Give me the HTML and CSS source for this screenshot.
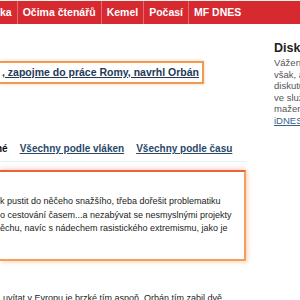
FILE: index.html
```html
<!DOCTYPE html>
<html lang="cs">
<head>
  <meta charset="UTF-8" />
  <title>Diskuse</title>
  <link rel="stylesheet" href="styles.css">
</head>
<body>

<!-- horní lišta -->
  <header class="topbar">
    <nav class="topnav">
      <a href="#">ka</a>
      <a href="#">Očima čtenářů</a>
      <a href="#">Kemel</a>
      <a href="#">Počasí</a>
      <a href="#">MF DNES</a>
    </nav>
  </header>

  <div class="page">
    <main class="content">
      <h1 class="headline"><a href="#">, zapojme do práce Romy, navrhl Orbán</a></h1>

      <div class="tabs">
        <span class="tab-current">hé</span>
        <a href="#">Všechny podle vláken</a>
        <a href="#">Všechny podle času</a>
      </div>

      <div class="comment">
        <p>k pustit do něčeho snažšího, třeba dořešit problematiku<br>
        o cestování časem...a nezabývat se nesmyslnými projekty<br>
        ěchu, navíc s nádechem rasistického extremismu, jako je</p>
      </div>

      <div class="reply">
        <p>uvítat v Evropu je brzké tím aspoň. Orbán tím zabil dvě</p>
      </div>
    </main>

    <aside class="sidebar">
      <h2>Disk</h2>
      <p>Vážení<br>
      však, a<br>
      diskutu<br>
      ve služ<br>
      mažem<br>
      <a href="#">iDNES</a></p>
    </aside>
  </div>

</body>
</html>
```

FILE: styles.css
```css
* {
  margin: 0;
  padding: 0;
  box-sizing: border-box;
}

html {
  overflow: hidden;
}

body {
  font-family: 'Liberation Sans', Arial, sans-serif;
  background: #fff;
  color: #222;
  width: 300px;
  height: 300px;
  overflow: hidden;
}

/* horní lišta */
.topbar {
  background: #d62a30;
  border-top: 1px solid #e8f4ec;
  height: 24px;
  width: 300px;
  overflow: hidden;
}

.topnav {
  display: flex;
  height: 100%;
  margin-left: -5px;
}

.topnav a {
  color: #fff;
  font-size: 10.5px;
  font-weight: bold;
  text-decoration: none;
  line-height: 23px;
  padding: 0 5px;
  border-right: 1px solid #e56b70;
  white-space: nowrap;
}

.topnav a:last-child {
  border-right: none;
}

/* obsah */
.page {
  display: flex;
  align-items: flex-start;
  width: 300px;
  height: 276px;
  overflow: hidden;
}

.content {
  width: 246px;
  flex-shrink: 0;
}

.headline {
  display: block;
  width: fit-content;
  margin-top: 37px;
  height: 23px;
  border: 2px solid #ee9a52;
  border-left: none;
  box-shadow: 0 0 3px rgba(240, 160, 90, 0.5);
  padding: 0 3px 0 2px;
  font-size: 10.5px;
  line-height: 19px;
  white-space: nowrap;
}

.headline a {
  color: #223a58;
  text-decoration: underline;
}

.tabs {
  display: flex;
  gap: 12px;
  height: 20px;
  margin: 58px 0 0 -4px;
  border-bottom: 1px solid #e2f2f7;
  font-size: 10px;
  font-weight: bold;
  line-height: 13px;
  white-space: nowrap;
}

.tab-current {
  color: #111;
}

.tabs a {
  color: #2a4868;
}

.comment {
  margin-top: 8px;
  height: 91px;
  border: 2px solid #f0a05a;
  border-top-color: #e8633c;
  border-left: none;
  box-shadow: 0 -2px 4px rgba(240, 140, 120, 0.3), 2px 2px 4px rgba(245, 175, 110, 0.35);
  padding-top: 23px;
}

.comment p {
  font-size: 9px;
  line-height: 13.5px;
  white-space: nowrap;
  color: #222;
}

.reply {
  padding: 31px 0 0 3px;
}

.reply p {
  font-size: 9px;
  line-height: 13px;
  white-space: nowrap;
}

/* pravý sloupec */
.sidebar {
  margin-left: 28px;
  width: 26px;
  flex-shrink: 0;
  overflow: hidden;
  white-space: nowrap;
}

.sidebar h2 {
  margin-top: 16px;
  font-size: 12.5px;
  line-height: 16px;
  color: #222;
}

.sidebar p {
  margin-top: 1px;
  font-size: 9.5px;
  line-height: 11.6px;
  color: #555;
}

.sidebar a {
  color: #3a5f8c;
}
```
